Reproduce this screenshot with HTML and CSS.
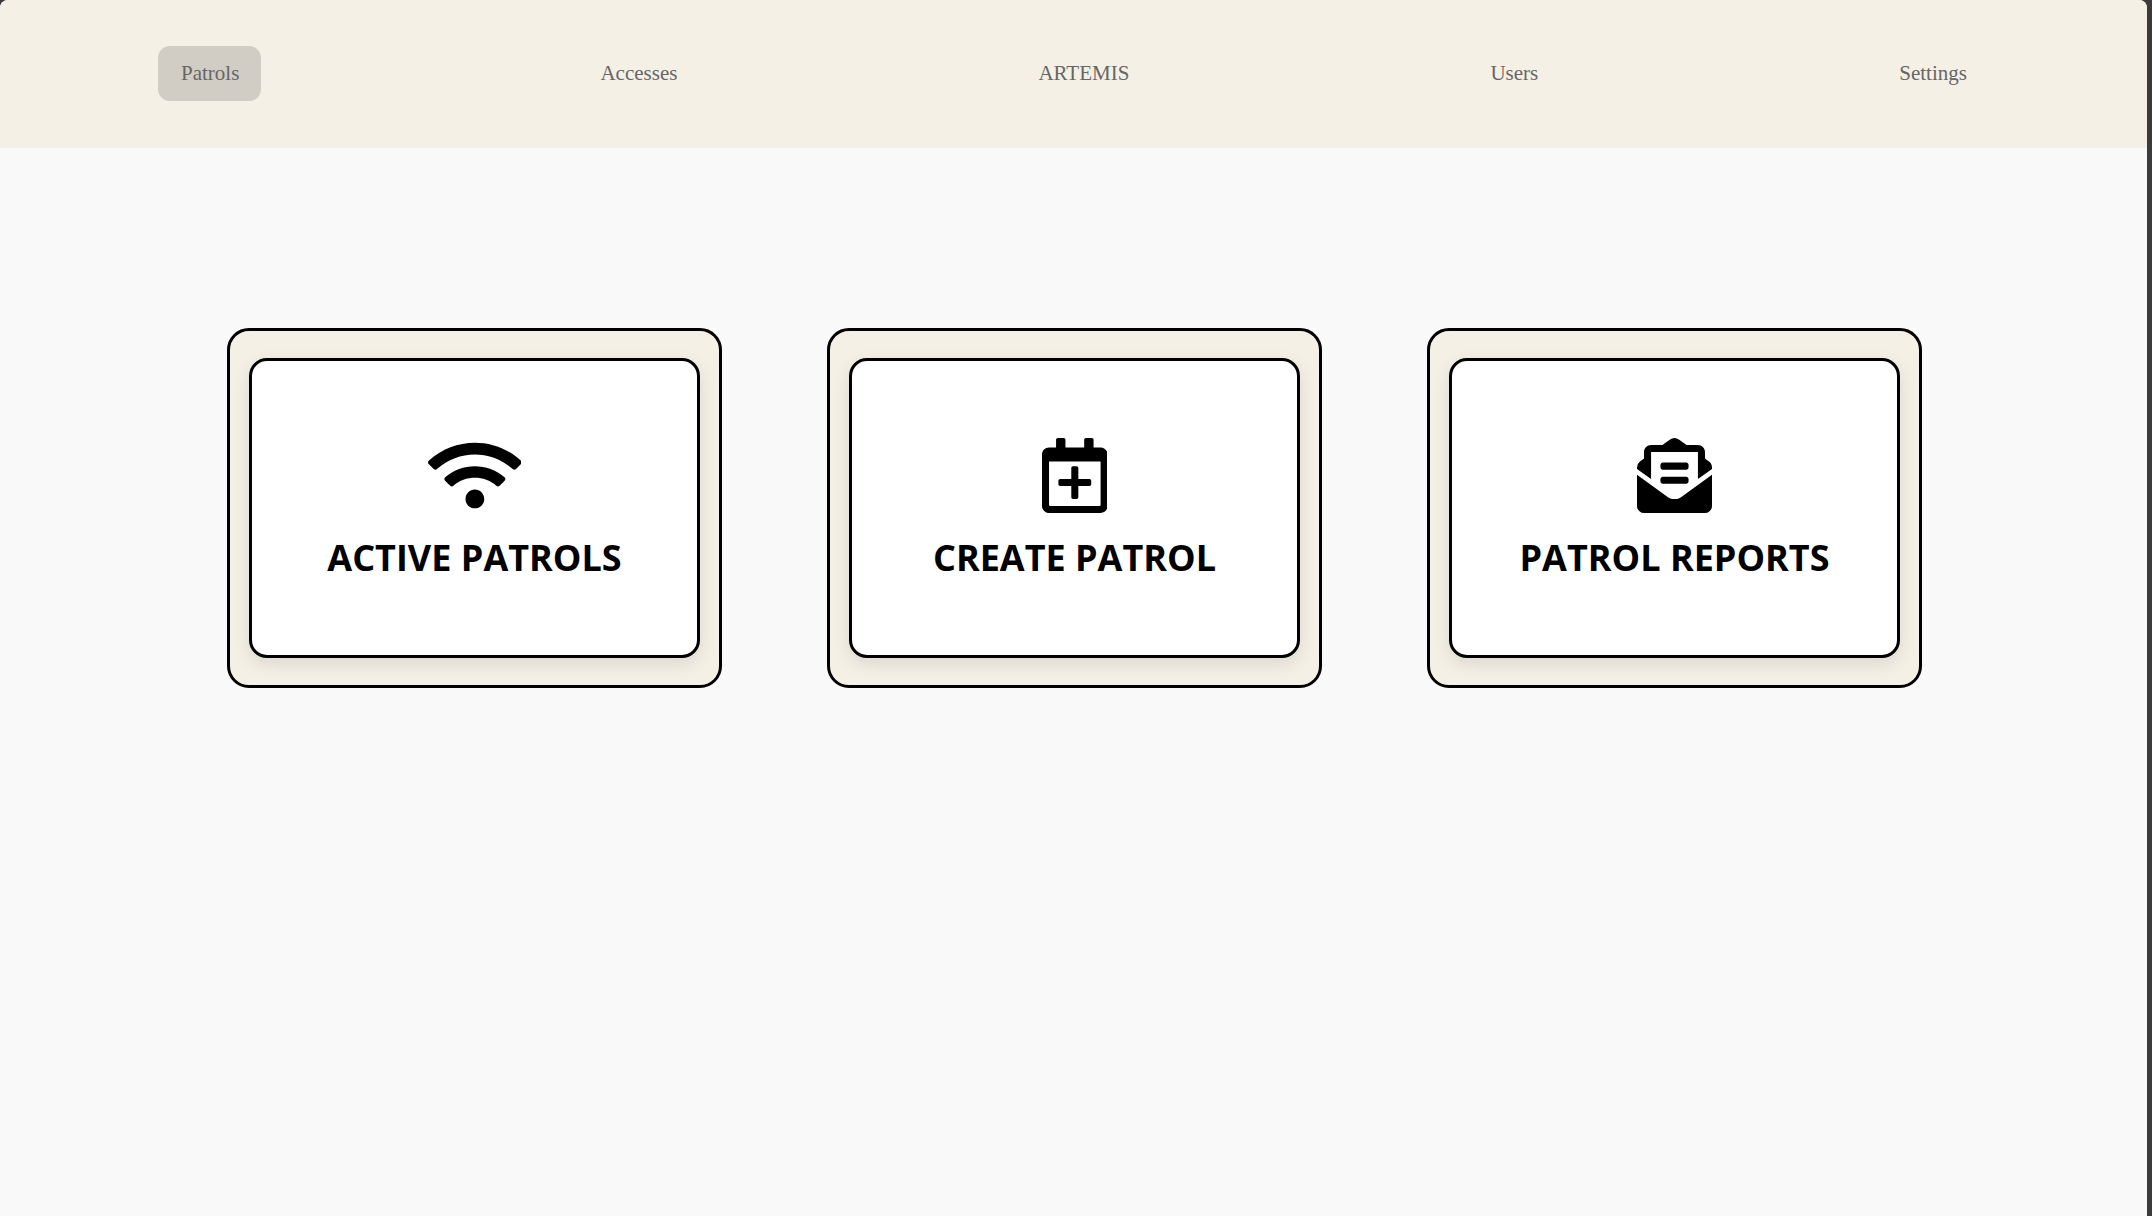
FILE: index.html
```
<!DOCTYPE html>
<html lang="en">
<head>
<meta charset="utf-8">
<meta name="viewport" content="width=device-width, initial-scale=1">
<title>ARTEMIS - Patrols</title>
<link rel="stylesheet" href="styles.css">
</head>
<body>
<div class="page">
  <header class="header">
    <nav class="nav">
      <a class="nav-link nav-link-active" href="#patrols">Patrols</a>
      <a class="nav-link" href="#accesses">Accesses</a>
      <a class="nav-link" href="#artemis">ARTEMIS</a>
      <a class="nav-link" href="#users">Users</a>
      <a class="nav-link" href="#settings">Settings</a>
    </nav>
  </header>
  <main class="cards">
    <div class="card">
      <button class="card-button" type="button">
        <svg class="icon" viewBox="0 0 640 512" aria-hidden="true"><path d="M634.91 154.88C457.74-8.99 182.19-8.93 5.09 154.88c-6.66 6.16-6.79 16.59-.35 22.98l34.24 33.97c6.14 6.1 16.02 6.23 22.4.38 145.92-133.68 371.3-133.71 517.25 0 6.38 5.85 16.26 5.71 22.4-.38l34.24-33.97c6.43-6.39 6.3-16.82-.36-22.98zM320 352c-35.35 0-64 28.65-64 64s28.65 64 64 64 64-28.65 64-64-28.65-64-64-64zm202.67-83.59c-115.26-101.93-290.21-101.82-405.34 0-6.9 6.1-7.12 16.69-.57 23.15l34.44 33.99c6 5.92 15.66 6.32 22.05.8 83.95-72.57 209.74-72.41 293.49 0 6.39 5.52 16.05 5.13 22.05-.8l34.44-33.99c6.56-6.46 6.33-17.06-.56-23.15z"/></svg>
        <span class="card-title">ACTIVE PATROLS</span>
      </button>
    </div>
    <div class="card">
      <button class="card-button" type="button">
        <svg class="icon" viewBox="0 0 448 512" aria-hidden="true"><path d="M336 292v24c0 6.6-5.4 12-12 12h-76v76c0 6.6-5.4 12-12 12h-24c-6.6 0-12-5.4-12-12v-76h-76c-6.6 0-12-5.4-12-12v-24c0-6.6 5.4-12 12-12h76v-76c0-6.6 5.4-12 12-12h24c6.6 0 12 5.4 12 12v76h76c6.6 0 12 5.4 12 12zm112-180v352c0 26.5-21.5 48-48 48H48c-26.5 0-48-21.5-48-48V112c0-26.5 21.5-48 48-48h48V12c0-6.6 5.4-12 12-12h40c6.6 0 12 5.4 12 12v52h128V12c0-6.6 5.4-12 12-12h40c6.6 0 12 5.4 12 12v52h48c26.5 0 48 21.5 48 48zm-48 346V160H48v298c0 3.3 2.7 6 6 6h340c3.3 0 6-2.7 6-6z"/></svg>
        <span class="card-title">CREATE PATROL</span>
      </button>
    </div>
    <div class="card">
      <button class="card-button" type="button">
        <svg class="icon" viewBox="0 0 512 512" aria-hidden="true"><path d="M176 216h160c8.84 0 16-7.16 16-16v-16c0-8.84-7.16-16-16-16H176c-8.84 0-16 7.16-16 16v16c0 8.84 7.16 16 16 16zm-16 80c0 8.84 7.16 16 16 16h160c8.84 0 16-7.16 16-16v-16c0-8.84-7.16-16-16-16H176c-8.84 0-16 7.16-16 16v16zm96 121.13c-16.42 0-32.84-5.06-46.86-15.19L0 250.86V464c0 26.51 21.49 48 48 48h416c26.51 0 48-21.49 48-48V250.86L302.86 401.94c-14.02 10.12-30.44 15.19-46.86 15.19zm237.61-254.18c-8.85-6.94-17.24-13.47-29.61-22.81V96c0-26.51-21.49-48-48-48h-77.55c-3.04-2.2-5.87-4.26-9.04-6.56C312.6 29.17 279.2-.35 256 0c-23.2-.35-56.59 29.17-73.41 41.44-3.17 2.3-6 4.36-9.04 6.56H96c-26.51 0-48 21.49-48 48v44.14c-12.37 9.33-20.76 15.87-29.61 22.81A47.995 47.995 0 0 0 0 200.72v10.65l96 69.35V96h320v184.72l96-69.35v-10.65c0-14.74-6.78-28.67-18.39-37.77z"/></svg>
        <span class="card-title">PATROL REPORTS</span>
      </button>
    </div>
  </main>
</div>
</body>
</html>
```

FILE: styles.css
```
* {
  box-sizing: border-box;
}

body {
  margin: 0;
  padding-right: 5px;
  background: #3b3b3b;
}

.page {
  min-height: 100vh;
  overflow: hidden;
  border-radius: 8px 8px 0 0;
  background: #f9f9f9;
}

.header {
  padding: 46px 0 47px;
  background: #f5f0e6;
}

.nav {
  display: flex;
  justify-content: space-around;
}

.nav-link {
  padding: 15px 22px 16px 23px;
  border-radius: 12px;
  color: #666;
  font: 21px/24px "Liberation Serif", "Times New Roman", serif;
  text-decoration: none;
}

.nav-link-active {
  background: #d1ccc4;
}

.cards {
  display: grid;
  grid-template-columns: repeat(3, 1fr);
  gap: 105px;
  padding: 180px 225px 0 227px;
}

.card {
  padding: 27px 19px;
  border: 3px solid #000;
  border-radius: 22px;
  background: #f5f0e6;
}

.card-button {
  display: flex;
  flex-direction: column;
  align-items: center;
  gap: 19px;
  width: 100%;
  height: 300px;
  padding: 77px 0 0;
  border: 3px solid #000;
  border-radius: 18px;
  background: #fff;
  box-shadow: 0 6px 18px rgba(0, 0, 0, 0.1);
  color: #000;
  cursor: pointer;
}

.icon {
  height: 75px;
  fill: currentColor;
}

.card-title {
  font: 700 36px/52px "Segoe UI", "Open Sans", "Noto Sans", sans-serif;
}
```
